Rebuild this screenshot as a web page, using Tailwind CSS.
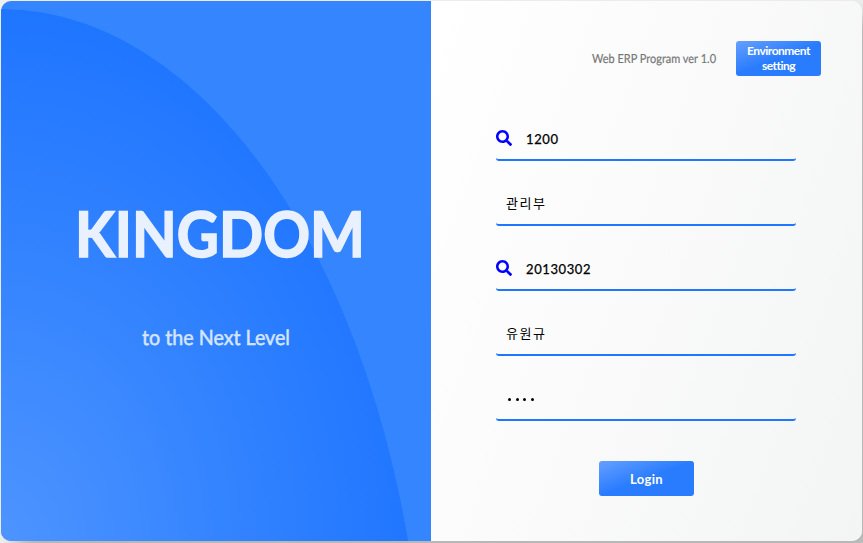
<!DOCTYPE html>
<html lang="ko">
<head>
<meta charset="utf-8">
<title>KINGDOM</title>
<script src="https://cdn.jsdelivr.net/npm/@tailwindcss/browser@4"></script>
</head>
<body class="w-[863px] h-[543px] overflow-hidden bg-[#f0f0f0] p-px font-['Lato','Noto_Sans_CJK_KR',sans-serif]">
<main class="flex w-[861px] h-[540px] rounded-[10px] overflow-hidden shadow-[14px_14px_20px_0px_rgba(0,0,0,0.26)]">
  <section class="relative w-[430px] h-full bg-[#3585ff] shrink-0">
    <svg class="block w-full h-full" viewBox="1 1 430 540" text-rendering="geometricPrecision">
      <defs>
        <radialGradient id="glow" gradientUnits="userSpaceOnUse" cx="0" cy="0" r="1" gradientTransform="translate(1 541) scale(608 764)">
          <stop offset="0" stop-color="#4d94ff"/>
          <stop offset=".7" stop-color="#1e75ff"/>
        </radialGradient>
      </defs>
      <ellipse cx="1" cy="755" rx="425" ry="746" fill="url(#glow)"/>
      <text y="256.500" font-size="63" font-weight="700" fill="#e9f1ff" stroke="#e9f1ff" stroke-width="1.6" x="75" textLength="290" lengthAdjust="spacingAndGlyphs">KINGDOM</text>
      <text x="142" y="344.5" font-size="21" fill="#d6e6ff" stroke="#d6e6ff" stroke-width=".5" textLength="148" lengthAdjust="spacingAndGlyphs">to the Next Level</text>
    </svg>
  </section>
  <section class="flex-1 h-full flex flex-col bg-[linear-gradient(110deg,#ffffff_0%,#f3f5f4_100%)]">
    <header class="flex justify-end items-center pt-10 pr-[41px] gap-[19px]">
      <svg class="w-[126px] h-[20px] overflow-visible" text-rendering="geometricPrecision"><text x="1" y="13.500" font-size="12.500" fill="#777" stroke="#777" stroke-width=".2" textLength="124" lengthAdjust="spacingAndGlyphs">Web ERP Program ver 1.0</text></svg>
      <button class="w-[85px] h-[35px] pb-[2px] rounded-[3px] bg-[linear-gradient(160deg,#66a0ff_0%,#2a7cff_50%)] text-white text-[12px] leading-[15px] font-bold tracking-[-0.5px]">Environment<br>setting</button>
    </header>
    <form class="ml-[65px] mt-[40px] w-[300px] flex flex-col gap-[20px] text-[13px] text-black">
      <div class="h-[45px] border-b-2 border-[#1f77ff] rounded-[3px] flex items-center gap-[14px]">
        <svg class="size-4" viewBox="0 0 512 512" fill="#0000ff"><path d="M505 442.7 405.3 343c-4.500-4.500-10.600-7-17-7H372c27.600-35.300 44-79.700 44-128C416 93.100 322.900 0 208 0S0 93.100 0 208s93.100 208 208 208c48.300 0 92.700-16.400 128-44v16.300c0 6.400 2.500 12.500 7 17l99.700 99.700c9.400 9.400 24.600 9.400 33.900 0l28.300-28.300c9.400-9.400 9.400-24.600.1-34zM208 336c-70.700 0-128-57.200-128-128 0-70.700 57.200-128 128-128 70.700 0 128 57.200 128 128 0 70.700-57.200 128-128 128z"/></svg>
        <span class="tracking-[0.6px] pt-[4px] [-webkit-text-stroke:0.25px_#000]">1200</span>
      </div>
      <div class="h-[45px] border-b-2 border-[#1f77ff] rounded-[3px] flex items-center pl-[10px]"><span class="font-['Noto_Sans_CJK_KR'] tracking-[1.5px]">관리부</span></div>
      <div class="h-[45px] border-b-2 border-[#1f77ff] rounded-[3px] flex items-center gap-[14px]">
        <svg class="size-4" viewBox="0 0 512 512" fill="#0000ff"><path d="M505 442.7 405.3 343c-4.500-4.500-10.600-7-17-7H372c27.600-35.300 44-79.700 44-128C416 93.100 322.900 0 208 0S0 93.100 0 208s93.100 208 208 208c48.300 0 92.700-16.400 128-44v16.300c0 6.400 2.500 12.500 7 17l99.700 99.700c9.400 9.400 24.600 9.400 33.900 0l28.300-28.300c9.400-9.400 9.400-24.600.1-34zM208 336c-70.700 0-128-57.200-128-128 0-70.700 57.200-128 128-128 70.700 0 128 57.200 128 128 0 70.700-57.200 128-128 128z"/></svg>
        <span class="tracking-[0.6px] pt-[4px] [-webkit-text-stroke:0.25px_#000]">20130302</span>
      </div>
      <div class="h-[45px] border-b-2 border-[#1f77ff] rounded-[3px] flex items-center pl-[10px]"><span class="font-['Noto_Sans_CJK_KR'] tracking-[1.5px]">유원규</span></div>
      <div class="h-[45px] border-b-2 border-[#1f77ff] rounded-[3px] flex items-center pl-[12px] pt-[4px] gap-[4.500px]">
        <i class="size-[3px] rounded-full bg-black"></i><i class="size-[3px] rounded-full bg-black"></i><i class="size-[3px] rounded-full bg-black"></i><i class="size-[3px] rounded-full bg-black"></i>
      </div>
    </form>
    <button class="ml-[168px] mt-[40px] w-[95px] h-[35px] rounded-[3px] bg-[linear-gradient(160deg,#66a0ff_0%,#2a7cff_50%)] text-white text-[13px] font-bold tracking-[0.3px] pt-[3px]">Login</button>
  </section>
</main>
</body>
</html>
